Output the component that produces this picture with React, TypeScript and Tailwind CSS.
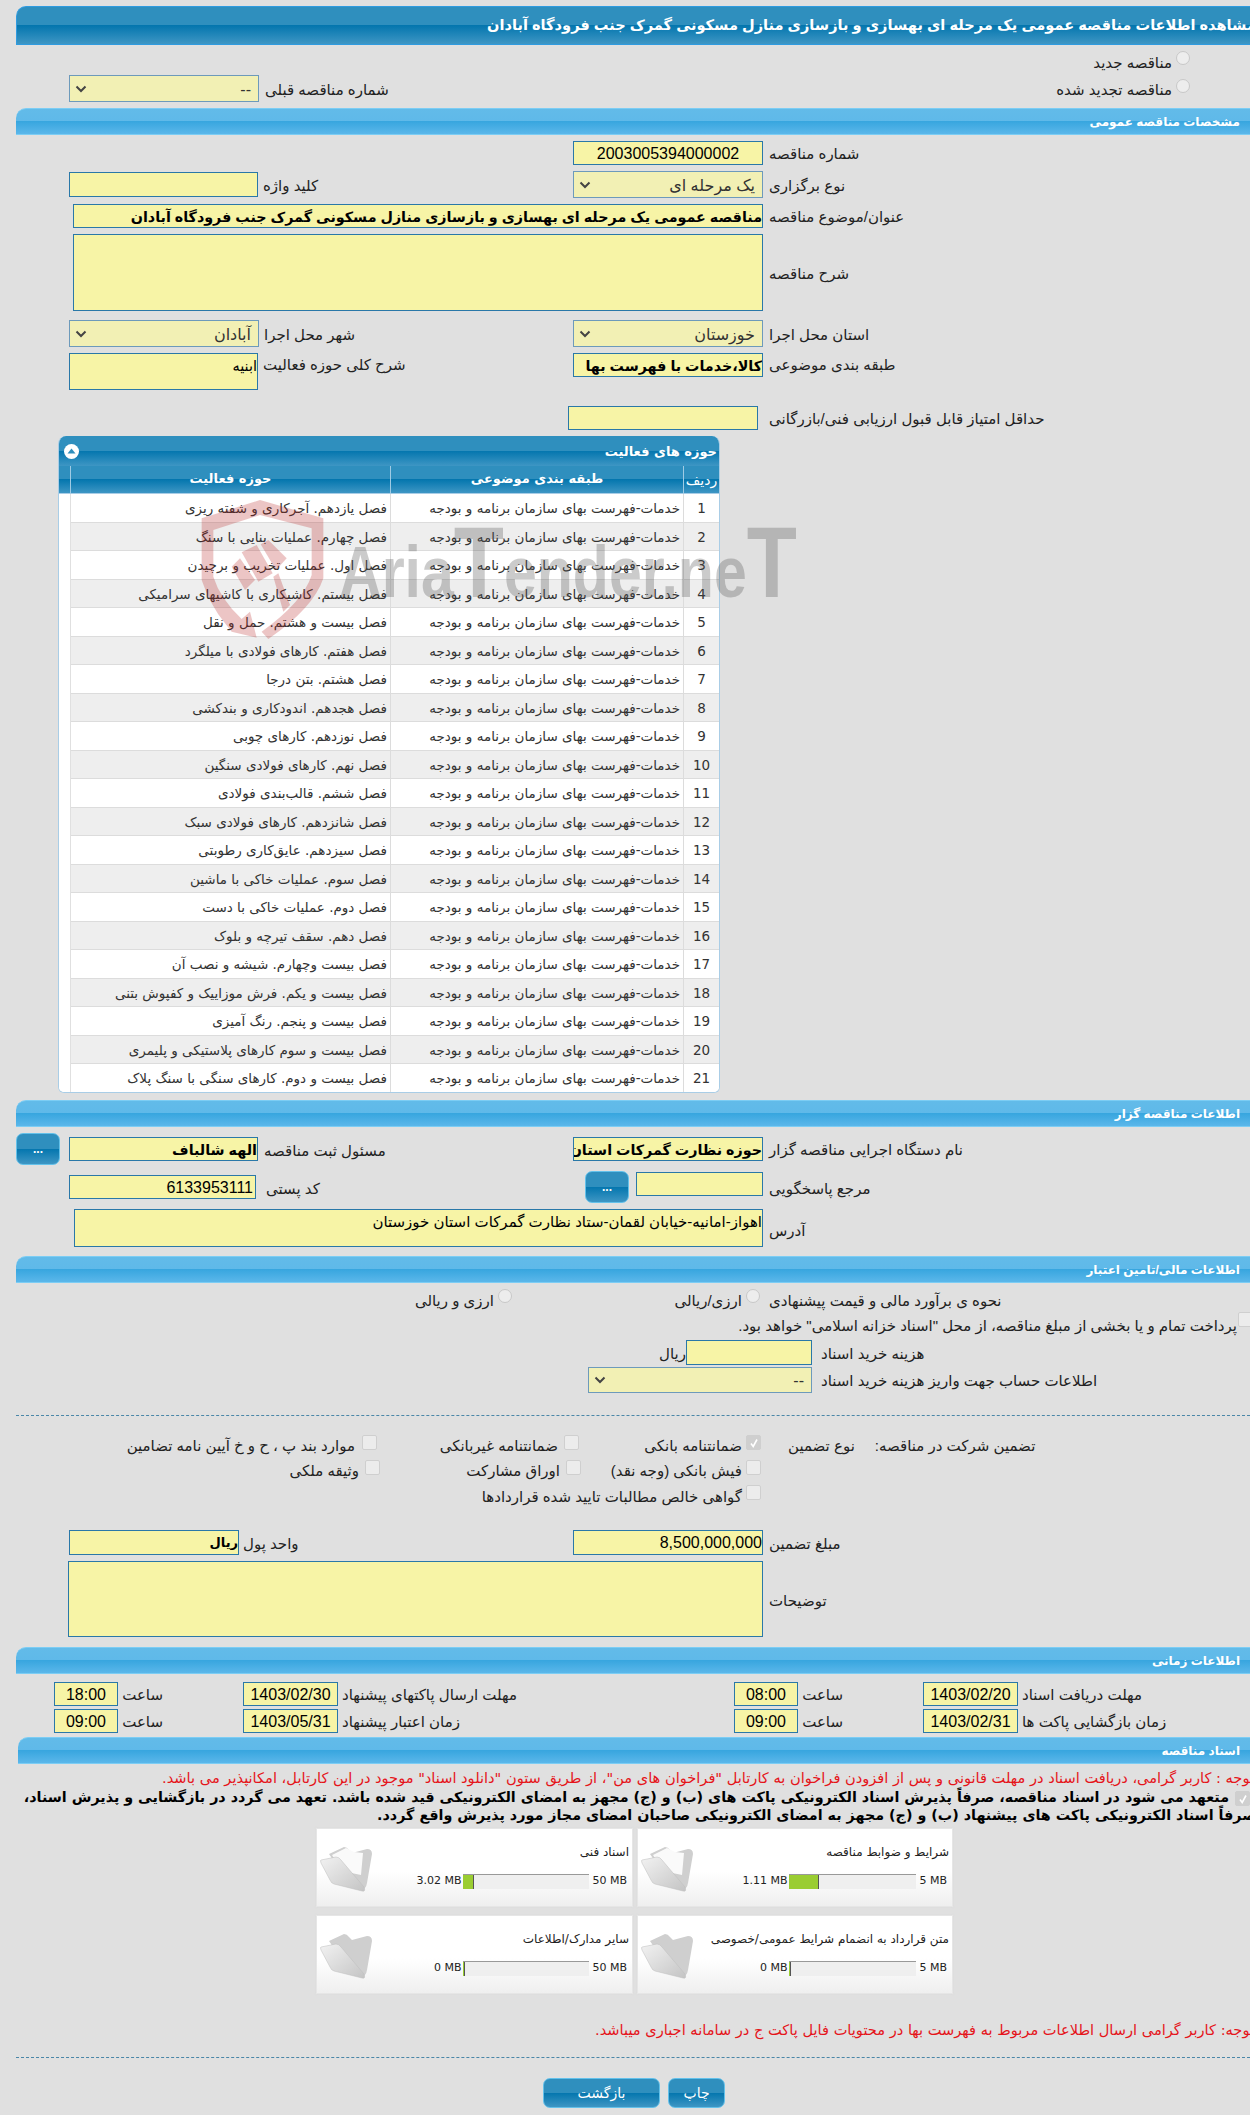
import React from "react";

const bar = "bg-[linear-gradient(#62bbe9_0%,#5fb9e9_48%,#38a6df_50%,#5bb7ea_100%)]";
const dark = "bg-[linear-gradient(#2f8fbe_0%,#2f8fbe_49%,#0476ae_50%,#3e96c4_100%)]";

function Sec({ t, cls }: { t: string; cls: string }) {
  return (
    <div className={"h-[27px] rounded-tl-[10px] border-t border-b border-[#7ccdf4] flex items-center justify-end pr-[10px] text-white font-bold text-[12px] " + bar + " " + cls}>
      <span dir="rtl">{t}</span>
    </div>
  );
}
function Inp({ cls, v, b, d, s }: { cls: string; v?: string; b?: boolean; d?: boolean; s?: string }) {
  const size = s ?? (b ? "text-[14.3px] font-bold" : "text-[16px]");
  return (
    <div dir="rtl" className={"shrink-0 overflow-hidden whitespace-nowrap border border-[#2a78a8] bg-[#f7f4a6] text-black leading-[24px] " + size + " " + cls}>
      {d ? <span dir="ltr">{v}</span> : v}
    </div>
  );
}
function Sel({ cls, v }: { cls: string; v: string }) {
  return (
    <div className={"shrink-0 flex items-center justify-between border border-[#6d9abb] bg-[#f2f0b4] text-[#333] text-[16px] pl-[5px] pr-[7px] " + cls}>
      <svg width="12" height="8" viewBox="0 0 12 8" className="text-[#444]"><path d="M1.5 1.5 L6 6 L10.5 1.5" fill="none" stroke="currentColor" strokeWidth="2" /></svg>
      <span dir="rtl" className="pt-[2px]">{v}</span>
    </div>
  );
}
function Lb({ t, cls }: { t: string; cls?: string }) {
  return <span dir="rtl" className={"shrink-0 whitespace-nowrap pt-[2px] text-[15px] leading-[20px] text-[#222] " + (cls ?? "")}>{t}</span>;
}
function Radio({ cls }: { cls: string }) {
  return <span className={"block shrink-0 w-[14px] h-[14px] rounded-full border border-[#c8c8c8] bg-[#ededed] " + cls} />;
}
function Chk({ on, cls }: { on?: boolean; cls: string }) {
  return (
    <span className={"flex items-center justify-center shrink-0 w-[15px] h-[15px] rounded-[2px] border border-[#cfcfcf] " + (on ? "bg-[#cfcfcf] " : "bg-[#ececec] ") + cls}>
      {on ? <svg width="10" height="10" viewBox="0 0 10 10"><path d="M2 5.5 L4.2 8.5 L8 1.5" fill="none" stroke="#fff" strokeWidth="1.6" /></svg> : null}
    </span>
  );
}
function Btn({ t, cls }: { t: string; cls: string }) {
  return (
    <div dir="rtl" className={"shrink-0 flex items-center justify-center rounded-[7px] border border-[#63c1ea] text-white " + dark + " " + cls}>{t}</div>
  );
}

const rows = [
  "فصل یازدهم. آجرکاری و شفته ریزی",
  "فصل چهارم. عملیات بنایی با سنگ",
  "فصل اول. عملیات تخریب و برچیدن",
  "فصل بیستم. کاشیکاری با کاشیهای سرامیکی",
  "فصل بیست و هشتم. حمل و نقل",
  "فصل هفتم. کارهای فولادی با میلگرد",
  "فصل هشتم. بتن درجا",
  "فصل هجدهم. اندودکاری و بندکشی",
  "فصل نوزدهم. کارهای چوبی",
  "فصل نهم. کارهای فولادی سنگین",
  "فصل ششم. قالب‌بندی فولادی",
  "فصل شانزدهم. کارهای فولادی سبک",
  "فصل سیزدهم. عایق‌کاری رطوبتی",
  "فصل سوم. عملیات خاکی با ماشین",
  "فصل دوم. عملیات خاکی با دست",
  "فصل دهم. سقف تیرچه و بلوک",
  "فصل بیست وچهارم. شیشه و نصب آن",
  "فصل بیست و یکم. فرش موزاییک و کفپوش بتنی",
  "فصل بیست و پنجم. رنگ آمیزی",
  "فصل بیست و سوم کارهای پلاستیکی و پلیمری",
  "فصل بیست و دوم. کارهای سنگی با سنگ پلاک",
];

function Folder({ sheet }: { sheet?: boolean }) {
  return (
    <svg width="54" height="48" viewBox="0 0 54 48" className="shrink-0">
      <defs>
        <linearGradient id="fb" x1="0" y1="0" x2="1" y2="1"><stop offset="0" stopColor="#f2f2f2" /><stop offset="1" stopColor="#c4c4c4" /></linearGradient>
      </defs>
      <path d="M9 9 L24 2 Q27 2 29 5 L32 8 L47 4 Q52 4 52 9 L47 38 Q46 44 42 44 L30 40 Z" fill="#cfcfcf" />
      {sheet ? <path d="M12 10 L26 3 L34 7 L43 8 L41 30 L22 26 Z" fill="#fafafa" /> : null}
      <path d="M1 15 L16 12 Q19 12 21 15 L44 42 Q46 47 42 46 L14 39 Q11 38 10 35 L1 18 Q0 15 1 15 Z" fill="url(#fb)" stroke="#bdbdbd" strokeWidth="0.5" />
    </svg>
  );
}

function Card({ t, used, max, pct, barW, sheet }: { t: string; used: string; max: string; pct: string; barW: string; sheet?: boolean }) {
  return (
    <div className="relative h-[79px] border border-[#e6e6e6] bg-[linear-gradient(#ffffff_0%,#ffffff_55%,#efefef_100%)] flex pl-[3px] pr-[3px] shadow-[0_0_2px_#d8d8d8]">
      <div className="mt-[16px]"><Folder sheet={sheet} /></div>
      <div className="flex-1 flex flex-col items-end">
        <span dir="rtl" className="mt-[13px] text-[12px] leading-[20px] text-[#222]">{t}</span>
        <div className="mt-[12px] flex items-center h-[15px] text-[11px] text-[#222] [font-family:'DejaVu_Sans',sans-serif]">
          <span className="mr-[2px] whitespace-nowrap">{used}</span>
          <div className={"h-[15px] bg-[#efefef] border-t border-[#999] " + barW}>
            <div className={"h-full bg-[#9acd32] border-r border-[#555] " + pct} />
          </div>
          <span className="ml-[3px] mr-[2px] whitespace-nowrap">{max}</span>
        </div>
      </div>
    </div>
  );
}

export default function App() {
  return (
    <div className="relative w-[1250px] h-[2115px] overflow-hidden bg-[#e0e0e0] pt-[6px] [font-family:'Liberation_Sans','DejaVu_Sans',sans-serif]">
      {/* title */}
      <div className={"ml-[16px] h-[39px] rounded-tl-[10px] border-t border-l border-b border-[#2f9be0] flex items-center justify-end overflow-hidden text-white font-bold text-[14.6px] " + dark}>
        <span dir="rtl" className="whitespace-nowrap mr-[-6px]">مشاهده اطلاعات مناقصه عمومی یک مرحله ای بهسازی و بازسازی منازل مسکونی گمرک جنب فرودگاه آبادان</span>
      </div>

      <div className="h-[30px] flex justify-end items-start pr-[60px] pt-[6px]">
        <Lb t="مناقصه جدید" />
        <Radio cls="ml-[4px] bg-[#dcdcdc]" />
      </div>
      <div className="h-[27px] flex items-center pl-[69px] pr-[60px] justify-between">
        <div className="flex items-center">
          <Sel cls="w-[190px] h-[27px]" v="--" />
          <Lb t="شماره مناقصه قبلی" cls="ml-[6px]" />
        </div>
        <div className="flex items-center">
          <Lb t="مناقصه تجدید شده" />
          <Radio cls="ml-[4px] mb-[6px]" />
        </div>
      </div>

      <Sec t="مشخصات مناقصه عمومی" cls="ml-[16px] mt-[6px]" />

      <div className="mt-[6px] h-[24px] flex pl-[573px] items-center">
        <div dir="ltr" className="shrink-0 w-[190px] h-[24px] border border-[#2a78a8] bg-[#f7f4a6] text-[16px] leading-[24px] text-center text-black">2003005394000002</div>
        <Lb t="شماره مناقصه" cls="ml-[6px]" />
      </div>
      <div className="mt-[6px] h-[27px] grid grid-cols-[573px_1fr] items-center">
        <div className="pl-[69px] flex items-center">
          <Inp cls="w-[189px] h-[25px] mb-[1px]" />
          <Lb t="کلید واژه" cls="ml-[5px]" />
        </div>
        <div className="flex items-center">
          <Sel cls="w-[190px] h-[27px]" v="یک مرحله ای" />
          <Lb t="نوع برگزاری" cls="ml-[6px]" />
        </div>
      </div>
      <div className="mt-[6px] h-[24px] flex pl-[73px] items-center">
        <Inp cls="w-[690px] h-[24px]" b v="مناقصه عمومی یک مرحله ای بهسازی و بازسازی منازل مسکونی گمرک جنب فرودگاه آبادان" />
        <Lb t="عنوان/موضوع مناقصه" cls="ml-[6px]" />
      </div>
      <div className="mt-[6px] h-[77px] flex pl-[73px] items-center">
        <Inp cls="w-[690px] h-[77px]" />
        <Lb t="شرح مناقصه" cls="ml-[6px]" />
      </div>
      <div className="mt-[9px] h-[27px] grid grid-cols-[573px_1fr] items-center">
        <div className="pl-[69px] flex items-center">
          <Sel cls="w-[190px] h-[27px]" v="آبادان" />
          <Lb t="شهر محل اجرا" cls="ml-[5px]" />
        </div>
        <div className="flex items-center">
          <Sel cls="w-[190px] h-[27px]" v="خوزستان" />
          <Lb t="استان محل اجرا" cls="ml-[6px]" />
        </div>
      </div>
      <div className="mt-[6px] h-[37px] grid grid-cols-[573px_1fr] items-start">
        <div className="pl-[69px] flex items-start">
          <Inp cls="w-[189px] h-[37px]" s="text-[14.5px]" v="ابنیه" />
          <Lb t="شرح کلی حوزه فعالیت" cls="ml-[5px]" />
        </div>
        <div className="flex items-start">
          <Inp cls="w-[190px] h-[24px]" b v="کالا،خدمات با فهرست بها" />
          <Lb t="طبقه بندی موضوعی" cls="ml-[6px]" />
        </div>
      </div>
      <div className="mt-[16px] h-[24px] flex pl-[568px] items-center">
        <Inp cls="w-[190px] h-[24px]" />
        <Lb t="حداقل امتیاز قابل قبول ارزیابی فنی/بازرگانی" cls="ml-[11px]" />
      </div>

      {/* activity panel */}
      <div className="relative mt-[6px] ml-[58px] w-[662px] h-[657px] rounded-t-[8px] rounded-b-[6px] border-l border-r border-b border-[#a9cde6] bg-white overflow-hidden [font-family:'DejaVu_Sans',sans-serif]">
        <div className={"h-[30px] flex items-center justify-between pl-[5px] pr-[2px] " + dark}>
          <span className="flex items-center justify-center w-[15px] h-[15px] rounded-full bg-white">
            <svg width="9" height="6" viewBox="0 0 9 6"><path d="M4.5 0.5 L8.5 5.5 L0.5 5.5 Z" fill="#2f8fbe" /></svg>
          </span>
          <span dir="rtl" className="text-white font-bold text-[13px] pt-[2px]">حوزه های فعالیت</span>
        </div>
        <div className={"flex h-[28px] text-white text-[13px] font-bold border-b border-[#a9cde6] " + dark}>
          <div className="w-[12px] border-r border-[#9fcbe4]" />
          <div dir="rtl" className="w-[320px] border-r border-[#9fcbe4] text-center leading-[26px]">حوزه فعالیت</div>
          <div dir="rtl" className="w-[293px] border-r border-[#9fcbe4] text-center leading-[26px]">طبقه بندی موضوعی</div>
          <div dir="rtl" className="flex-1 text-center text-[14px] font-normal leading-[28px]">ردیف</div>
        </div>
        {rows.map((r, i) => (
          <div key={i} className="flex h-[28.5px] text-[13.5px] text-[#333]">
            <div className="w-[12px] shrink-0 bg-white border-r border-[#e0e0e0]" />
            <div className={"flex flex-1 border-b border-[#dcdcdc] " + (i % 2 ? "bg-[#eeeeee]" : "bg-white")}>
              <div dir="rtl" className="w-[320px] shrink-0 border-r border-[#dcdcdc] pr-[3px] leading-[29px] whitespace-nowrap overflow-hidden">{r}</div>
              <div dir="rtl" className="w-[293px] shrink-0 border-r border-[#dcdcdc] pr-[3px] leading-[29px] whitespace-nowrap overflow-hidden">خدمات-فهرست بهای سازمان برنامه و بودجه</div>
              <div className="flex-1 text-center text-[13.5px] leading-[28px]">{i + 1}</div>
            </div>
          </div>
        ))}
      </div>

      <Sec t="اطلاعات مناقصه گزار" cls="ml-[16px] mt-[7px]" />

      <div className="mt-[6px] h-[32px] grid grid-cols-[573px_1fr]">
        <div className="pl-[16px] flex items-start">
          <Btn t="..." cls="w-[44px] h-[32px] font-bold text-[12px]" />
          <Inp cls="ml-[9px] mt-[4px] w-[189px] h-[24px]" b v="الهه شالباف" />
          <Lb t="مسئول ثبت مناقصه" cls="ml-[6px] mt-[6px]" />
        </div>
        <div className="flex items-start">
          <Inp cls="mt-[4px] w-[190px] h-[24px]" b v="حوزه نظارت گمرکات استان خوزستان" />
          <Lb t="نام دستگاه اجرایی مناقصه گزار" cls="ml-[6px] mt-[5px]" />
        </div>
      </div>
      <div className="mt-[6px] h-[32px] grid grid-cols-[573px_1fr]">
        <div className="pl-[69px] flex items-start">
          <Inp cls="mt-[4px] w-[187px] h-[24px] pr-[2px]" v="6133953111" d />
          <Lb t="کد پستی" cls="ml-[10px] mt-[6px]" />
        </div>
        <div className="flex items-start pl-[12px]">
          <Btn t="..." cls="w-[44px] h-[32px] font-bold text-[12px]" />
          <Inp cls="ml-[7px] mt-[1px] w-[127px] h-[24px]" />
          <Lb t="مرجع پاسخگویی" cls="ml-[6px] mt-[6px]" />
        </div>
      </div>
      <div className="mt-[6px] h-[38px] flex pl-[74px] items-start">
        <Inp cls="w-[689px] h-[38px]" s="text-[15px]" v="اهواز-امانیه-خیابان لقمان-ستاد نظارت گمرکات استان خوزستان" />
        <Lb t="آدرس" cls="ml-[6px] mt-[10px]" />
      </div>

      <Sec t="اطلاعات مالی/تامین اعتبار" cls="ml-[16px] mt-[9px]" />

      <div className="mt-[6px] h-[23px] flex items-start">
        <Lb t="ارزی و ریالی" cls="ml-[420px] w-[74px]" />
        <Radio cls="ml-[4px]" />
        <Lb t="ارزی/ریالی" cls="ml-[166px] w-[64px]" />
        <Radio cls="ml-[4px] bg-[#dcdcdc]" />
        <Lb t="نحوه ی برآورد مالی و قیمت پیشنهادی" cls="ml-[9px]" />
      </div>
      <div className="h-[22px] flex justify-end items-start">
        <Lb t="پرداخت تمام و یا بخشی از مبلغ مناقصه، از محل &quot;اسناد خزانه اسلامی&quot; خواهد بود." cls="mt-[2px]" />
        <Chk cls="ml-[1px] mr-[-3px]" />
      </div>
      <div className="mt-[6px] h-[25px] flex items-center pl-[662px]">
        <Lb t="ریال" cls="w-[24px]" />
        <Inp cls="w-[126px] h-[25px]" />
        <Lb t="هزینه خرید اسناد" cls="ml-[9px]" />
      </div>
      <div className="mt-[2px] h-[26px] flex items-center pl-[588px]">
        <Sel cls="w-[224px] h-[26px]" v="--" />
        <Lb t="اطلاعات حساب جهت واریز هزینه خرید اسناد" cls="ml-[9px]" />
      </div>

      <div className="mt-[22px] ml-[16px] border-t border-dashed border-[#4a87a8]" />

      <div className="mt-[19px] h-[25px] flex items-start">
        <Lb t="موارد بند پ ، ح و خ آیین نامه تضامین" cls="ml-[130px] w-[225px] mt-[-1px]" /><Chk cls="ml-[7px]" />
        <Lb t="ضمانتنامه غیربانکی" cls="ml-[60px] w-[121px] mt-[-1px]" /><Chk cls="ml-[6px]" />
        <Lb t="ضمانتنامه بانکی" cls="ml-[61px] w-[102px] mt-[-1px]" /><Chk on cls="ml-[4px]" />
        <Lb t="نوع تضمین" cls="ml-[27px] mt-[-1px]" />
        <Lb t="تضمین شرکت در مناقصه:" cls="ml-[20px] mt-[-1px]" />
      </div>
      <div className="h-[25px] flex items-start">
        <Lb t="وثیقه ملکی" cls="ml-[287px] w-[72px] mt-[-1px]" /><Chk cls="ml-[6px]" />
        <Lb t="اوراق مشارکت" cls="ml-[90px] w-[90px] mt-[-1px]" /><Chk cls="ml-[6px]" />
        <Lb t="فیش بانکی (وجه نقد)" cls="ml-[25px] w-[136px] mt-[-1px]" /><Chk cls="ml-[4px]" />
      </div>
      <div className="h-[45px] flex items-start pl-[482px]">
        <Lb t="گواهی خالص مطالبات تایید شده قراردادها" cls="w-[260px]" /><Chk cls="ml-[4px]" />
      </div>

      <div className="h-[25px] grid grid-cols-[573px_1fr] items-center">
        <div className="pl-[69px] flex items-center">
          <Inp cls="w-[170px] h-[25px]" s="text-[13px] font-bold" v="ریال" />
          <Lb t="واحد پول" cls="ml-[4px]" />
        </div>
        <div className="flex items-center">
          <Inp cls="w-[190px] h-[25px]" v="8,500,000,000" d />
          <Lb t="مبلغ تضمین" cls="ml-[6px]" />
        </div>
      </div>
      <div className="mt-[6px] h-[76px] flex pl-[68px] items-center">
        <Inp cls="w-[695px] h-[76px]" />
        <Lb t="توضیحات" cls="ml-[6px] mt-[2px]" />
      </div>

      <Sec t="اطلاعات زمانی" cls="ml-[16px] mt-[10px]" />

      {[["18:00", "1403/02/30", "مهلت ارسال پاکتهای پیشنهاد", "08:00", "1403/02/20", "مهلت دریافت اسناد", "mt-[8px]"],
        ["09:00", "1403/05/31", "زمان اعتبار پیشنهاد", "09:00", "1403/02/31", "زمان بازگشایی پاکت ها", "mt-[3px]"]].map((r, i) => (
        <div key={i} className={"h-[24px] flex items-center pl-[54px] " + r[6]}>
          <Inp cls="w-[64px] h-[24px] text-center" v={r[0]} d />
          <Lb t="ساعت" cls="ml-[3px] w-[42px]" />
          <Inp cls="ml-[80px] w-[95px] h-[24px] text-center" v={r[1]} d />
          <Lb t={r[2]} cls="ml-[4px] w-[392px] text-left" />
          <Inp cls="w-[64px] h-[24px] text-center" v={r[3]} d />
          <Lb t="ساعت" cls="ml-[3px] w-[42px]" />
          <Inp cls="ml-[80px] w-[95px] h-[24px] text-center" v={r[4]} d />
          <Lb t={r[5]} cls="ml-[4px]" />
        </div>
      ))}

      <Sec t="اسناد مناقصه" cls="ml-[18px] mt-[4px]" />

      <div dir="rtl" className="mt-[5px] h-[18px] mr-[-4px] whitespace-nowrap text-[14.6px] leading-[18px] text-[#e5141a] [font-family:'DejaVu_Sans',sans-serif]">
        توجه : کاربر گرامی، دریافت اسناد در مهلت قانونی و پس از افزودن فراخوان به کارتابل &quot;فراخوان های من&quot;، از طریق ستون &quot;دانلود اسناد&quot; موجود در این کارتابل، امکانپذیر می باشد.
      </div>
      <div dir="rtl" className="mt-[1px] mr-[-6px] h-[37px] text-[14.3px] font-bold leading-[18px] text-black [font-family:'DejaVu_Sans',sans-serif]">
        <Chk on cls="inline-flex align-top mt-[3px] ml-[6px] mr-[6px]" />
        متعهد می شود در اسناد مناقصه، صرفاً پذیرش اسناد الکترونیکی پاکت های (ب) و (ج) مجهز به امضای الکترونیکی قید شده باشد. تعهد می گردد در بازگشایی و پذیرش اسناد، صرفاً اسناد الکترونیکی پاکت های پیشنهاد (ب) و (ج) مجهز به امضای الکترونیکی صاحبان امضای مجاز مورد پذیرش واقع گردد.
      </div>

      <div className="mt-[3px] ml-[316px] w-[637px] grid grid-cols-[317px_316px] gap-x-[4px] gap-y-[8px] [font-family:'DejaVu_Sans',sans-serif]">
        <Card t="اسناد فنی" used="3.02 MB" max="50 MB" pct="w-[8%]" barW="w-[126px]" sheet />
        <Card t="شرایط و ضوابط مناقصه" used="1.11 MB" max="5 MB" pct="w-[23%]" barW="w-[127px]" sheet />
        <Card t="سایر مدارک/اطلاعات" used="0 MB" max="50 MB" pct="w-[1%]" barW="w-[126px]" />
        <Card t="متن قرارداد به انضمام شرایط عمومی/خصوصی" used="0 MB" max="5 MB" pct="w-[1%]" barW="w-[127px]" />
      </div>

      <div dir="rtl" className="mt-[27px] h-[18px] mr-[-4px] whitespace-nowrap text-[14.6px] leading-[18px] text-[#e5141a] [font-family:'DejaVu_Sans',sans-serif]">
        توجه: کاربر گرامی ارسال اطلاعات مربوط به فهرست بها در محتویات فایل پاکت ج در سامانه اجباری میباشد.
      </div>
      <div className="mt-[18px] ml-[16px] border-t border-dashed border-[#4a87a8]" />
      <div className="mt-[20px] ml-[543px] flex gap-[8px] text-[14px] [font-family:'DejaVu_Sans',sans-serif]">
        <Btn t="بازگشت" cls="w-[117px] h-[30px]" />
        <Btn t="چاپ" cls="w-[57px] h-[30px]" />
      </div>

      {/* watermark */}
      <div className="absolute left-[190px] top-[495px] w-[150px] h-[150px] opacity-25 pointer-events-none">
        <svg width="150" height="150" viewBox="0 0 450 450" fill="#b71c1c">
          <path d="M210 15 L35 70 L35 255 Q60 330 105 385 L125 410 L200 428 L180 350 L155 372 Q90 310 70 245 L70 105 L210 60 Z" />
          <path d="M210 15 L400 70 L400 250 Q370 340 235 432 L215 410 Q340 320 365 240 L365 100 L210 60 Z" />
          <path d="M155 172 L200 150 L248 235 L205 260 Z" />
          <path d="M125 215 L150 190 L195 255 L165 285 Z" />
          <path d="M212 148 L235 135 L290 190 L258 225 Z" />
          <path d="M250 245 L265 235 L300 330 L280 350 Z" />
        </svg>
      </div>
      <div className="absolute left-[339px] top-[512px] flex items-baseline whitespace-nowrap origin-left font-bold text-[#555] opacity-30 pointer-events-none [transform:scaleX(0.82)]">
        <span className="text-[72px] leading-[100px]">Aria</span>
        <span className="text-[100px] leading-[100px]">T</span>
        <span className="text-[72px] leading-[100px]">ender.ne</span>
        <span className="text-[100px] leading-[100px]">T</span>
      </div>
    </div>
  );
}
